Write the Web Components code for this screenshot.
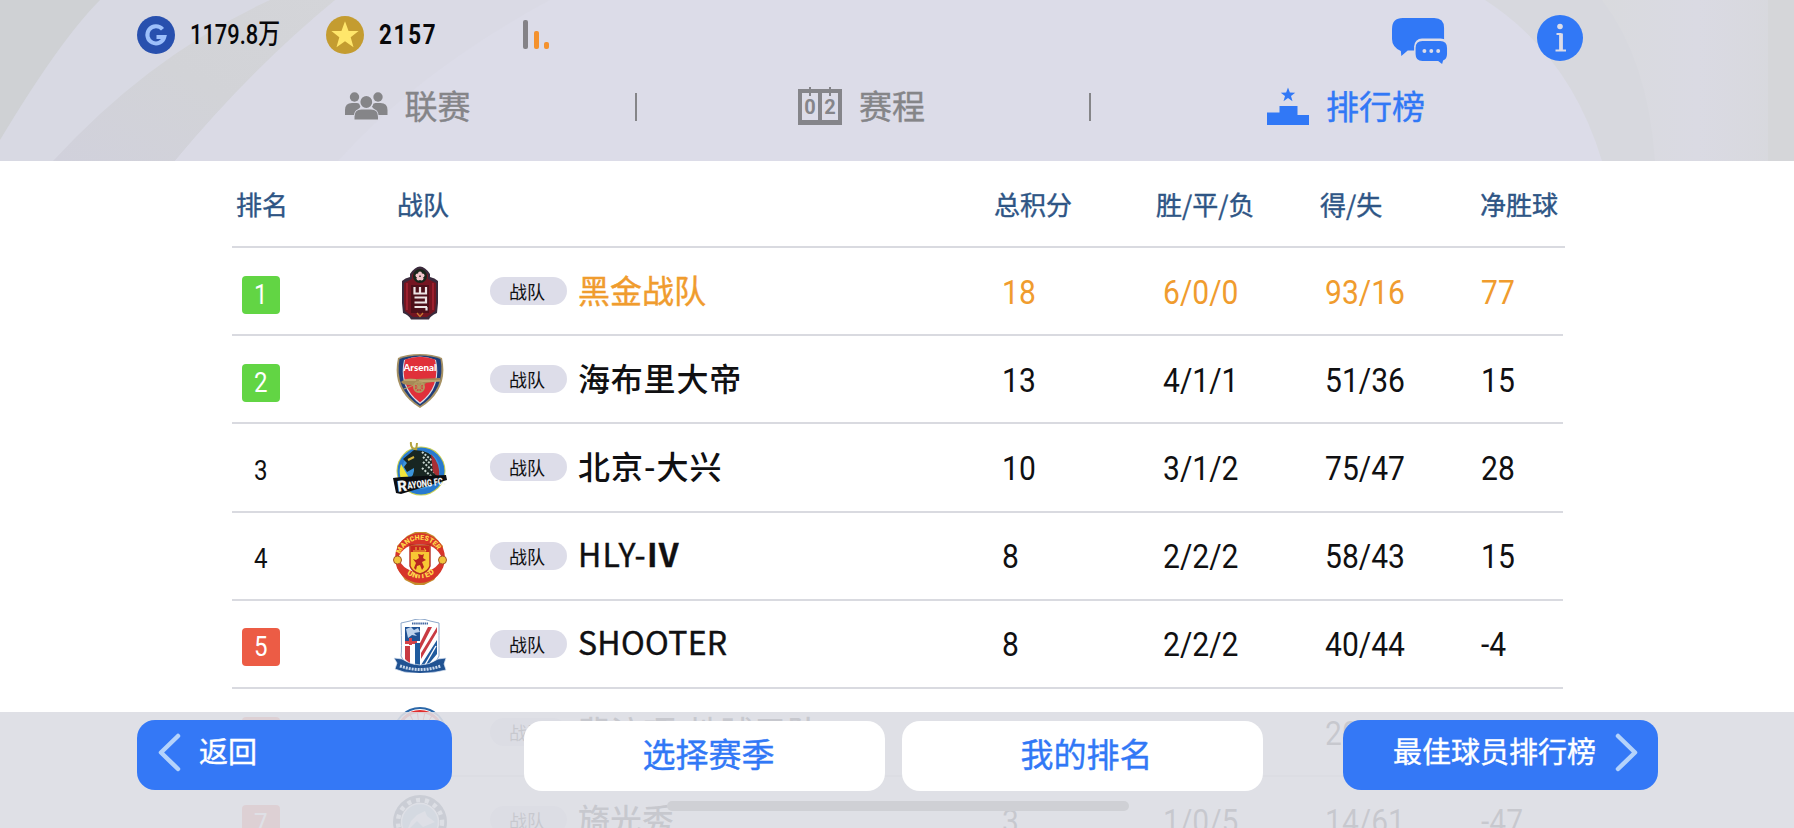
<!DOCTYPE html>
<html lang="zh-CN">
<head>
<meta charset="utf-8">
<title>排行榜</title>
<style>
  body {
    margin: 0;
    width: 1794px;
    height: 828px;
    overflow: hidden;
    background: #fff;
    font-family: "Noto Sans CJK SC", sans-serif;
  }
</style>
</head>
<body>
<league-screen>
  <league-header slot="header">
    <currency-chip slot="status" kind="gp" style="width: 189px">1179.8万</currency-chip>
    <currency-chip slot="status" kind="coin" style="width: 197px" bold>2157</currency-chip>
    <signal-bars slot="status"></signal-bars>
    <league-tab icon="people">联赛</league-tab>
    <league-tab icon="calendar">赛程</league-tab>
    <league-tab icon="podium" active>排行榜</league-tab>
  </league-header>
  <rank-table>
    <rank-row rank="1" zone="up" crest="eul" points="18" record="6/0/0" goals="93/16" diff="77" mine>黑金战队</rank-row>
    <rank-row rank="2" zone="up" crest="arsenal" points="13" record="4/1/1" goals="51/36" diff="15" style="--tracking: .8px">海布里大帝</rank-row>
    <rank-row rank="3" crest="rayong" points="10" record="3/1/2" goals="75/47" diff="28" style="--tracking: 1px">北京-大兴</rank-row>
    <rank-row rank="4" crest="united" points="8" record="2/2/2" goals="58/43" diff="15" latin style="--tracking: 1.3px">HLY-<b>IV</b></rank-row>
    <rank-row rank="5" zone="down" crest="shenhua" points="8" record="2/2/2" goals="40/44" diff="-4" latin style="--tracking: .3px">SHOOTER</rank-row>
    <rank-row rank="6" zone="down" crest="round" points="3" record="1/0/5" goals="20/47" diff="-27" style="--tracking: .8px">翡流项-地球卫队</rank-row>
    <rank-row rank="7" zone="down" crest="steel" points="3" record="1/0/5" goals="14/61" diff="-47">旖光秀</rank-row>
  </rank-table>
  <nav-bar slot="footer">
    <nav-button kind="back">返回</nav-button>
    <nav-button kind="plain" style="margin-left: 72px">选择赛季</nav-button>
    <nav-button kind="plain" style="margin-left: 17px">我的排名</nav-button>
    <nav-button kind="next" style="margin-left: 80px">最佳球员排行榜</nav-button>
  </nav-bar>
</league-screen>

<script>
const STAR = 'M0,-10 L2.5,-3.2 9.6,-3.1 4,1.3 6,8.2 0,4.1 -6,8.2 -4,1.3 -9.6,-3.1 -2.5,-3.2Z';

const ICONS = {
  people: `<svg width="43" height="28" viewBox="0 0 43 28" fill="#858588">
    <circle cx="9.5" cy="5" r="4.7"/><circle cx="33" cy="5" r="4.7"/>
    <path d="M0 23v-5q0-7 7-7h5q3 0 4 2.500q-1 3-3.500 4Q9.500 18.500 9 23z"/>
    <path d="M42.500 23v-5q0-7-7-7h-5q-3 0-4 2.500q1 3 3.500 4Q33 18.500 33.500 23z"/>
    <circle cx="21.300" cy="10" r="6.600" stroke="#dcdce8" stroke-width="1.400"/>
    <path d="M9.500 27.500v-3q0-7 7-7h9.500q7 0 7 7v3z"/></svg>`,
  calendar: `<svg width="44" height="38" viewBox="0 0 44 38">
    <path fill="#85858a" fill-rule="evenodd" d="M0 2h44v36H0zM4 6h16v27H4zM24 6h16v27H24z"/>
    <path stroke="#85858a" stroke-width="2" d="M12 0v9M32 0v9"/>
    <g font-family="Roboto, sans-serif" font-size="20" font-weight="700" fill="#85858a" text-anchor="middle">
      <text x="12" y="27">0</text><text x="32" y="27">2</text></g></svg>`,
  podium: `<svg width="42" height="38" viewBox="0 0 42 38" fill="#3178f6">
    <path d="${STAR}" transform="translate(21 8) scale(.75)"/>
    <path d="M0 25.500h12.500V19h18v9H42v10H0z"/></svg>`,
  gp: `<svg width="38" height="38" viewBox="0 0 38 38">
    <circle cx="19" cy="19" r="19" fill="#2850ae"/>
    <path d="M25.500 13.200A8.600 8.600 0 1 0 27.300 21H19.500" fill="none" stroke="#9dc0fb" stroke-width="4"/></svg>`,
  coin: `<svg width="38" height="38" viewBox="0 0 38 38">
    <circle cx="19" cy="19" r="19" fill="#c49c30"/>
    <path d="${STAR}" transform="translate(19 19.500) scale(1.420)" fill="#ffe66b"/></svg>`,
  chat: `<svg class="chat" width="56" height="46" viewBox="0 0 57 46" preserveAspectRatio="none">
    <path fill="#3178f6" d="M11 0h32q10 0 10 10v14q0 8-10 8.500H16L9.500 38 9 33Q0 29 0 21V11Q0 0 11 0z"/>
    <rect x="22.500" y="20.500" width="35" height="24" rx="8" fill="#dcdce8"/>
    <path fill="#3178f6" d="M31 23h18q7 0 7 7v6q0 5-4 6.500L51 46l-4-3H31q-7 0-7-7v-6q0-7 7-7z"/>
    <g fill="#dcdce8"><circle cx="33" cy="33" r="2"/><circle cx="40" cy="33" r="2"/><circle cx="47" cy="33" r="2"/></g></svg>`,
  info: `<svg width="46" height="46" viewBox="0 0 46 46">
    <circle cx="23" cy="23" r="23" fill="#3178f6"/>
    <circle cx="23" cy="11.500" r="2.800" fill="#dcdce8"/>
    <path fill="none" stroke="#dcdce8" stroke-width="3.800" d="M24 18.500V35"/>
    <path fill="none" stroke="#dcdce8" stroke-width="1.800" d="M19.500 19h5M18.500 35.500h10.500"/></svg>`
};

const CRESTS = {
  eul: `<path d="M17 8Q27-7 37 8v3q5 1 8 4v22l-1 10q-7 3-8 6.500H18Q16 49 10 47L9 37V15q3-3 8-4z" fill="#3a2a3c"/>
    <path d="M19 9Q27-3 35 9v4l8 4v20l-1 8-8 6H20l-8-6-1-8V17l8-4z" fill="#741521"/>
    <path d="M14 17v27M40 17v27" stroke="#b32738" stroke-width="1.300"/>
    <path d="M18 19h18v28H18z" fill="#4d101a"/>
    <circle cx="27" cy="10" r="7" fill="#17251b"/>
    <g fill="#f0c5cb"><circle cx="27" cy="7.500" r="2"/><circle cx="29.500" cy="9.500" r="2"/><circle cx="28.500" cy="12.500" r="2"/><circle cx="25.500" cy="12.500" r="2"/><circle cx="24.500" cy="9.500" r="2"/></g>
    <path d="M21.500 21v6.500H33V21M27 21v5.500M21.500 31.500H33v5H21.500M34 41H21.500M33.500 41v3.500" fill="none" stroke="#eee4e5" stroke-width="2.200"/>
    <path d="M24 47l3 3.500 3-3.500" fill="none" stroke="#c77932" stroke-width="1.300"/>`,
  arsenal: `<path d="M27 0Q40 0 49 4 56 36 27 54-2 36 5 4 13 0 27 0z" fill="#a69163"/>
    <path d="M27 1.500Q39 1.500 47.500 5 53 35 27 52 1 35 6.500 5 15 1.500 27 1.500z" fill="#203d78"/>
    <path d="M11 6Q27-1 43 6q6 28-16 44Q5 34 11 6z" fill="#d9dfeb"/>
    <path d="M12 5.500Q27 0 42 5.500q6 27-15 43Q6 33 12 5.500z" fill="#e0303a"/>
    <text x="27" y="17" text-anchor="middle" font-family="Lato, sans-serif" font-size="10" font-weight="900" fill="#fff" textLength="33" lengthAdjust="spacingAndGlyphs">Arsenal</text>
    <path d="M8 28q5-5 15-3l24-1v3l-14 2-2 2H16q-6 0-8-3z" fill="#a68a56"/>
    <path d="M11 26h12M26 27h21" stroke="#d5bd83" stroke-width="1"/>
    <circle cx="26" cy="33" r="5" fill="none" stroke="#b19960" stroke-width="2"/>
    <path d="M21 33h10M26 28v10M22.500 29.500l7 7M29.500 29.500l-7 7M11 35l10-4" stroke="#b19960" stroke-width="1.200"/>`,
  rayong: `<circle cx="28" cy="29" r="24.500" fill="#c8cf54"/><circle cx="28" cy="29" r="23.500" fill="#2779cf"/>
    <circle cx="28" cy="28" r="19" fill="#3b94dc"/>
    <path d="M8 22l8 14-7 4q-4-9-1-18z" fill="#f0e43d"/>
    <path d="M18 0q-1 6 5 8M24 1l-1 8" fill="none" stroke="#b3a340" stroke-width="2"/>
    <path d="M10 17L21 8l9 1q12 3 14 15l1 14H15q7-5 6-12l-7 4-3-5 3-4z" fill="#182622"/>
    <path d="M29 10l14 12M30 15l13 12M30 20l13 12M29 26l10 9" stroke="#c7d5cf" stroke-width="2" stroke-dasharray="2 1.500"/>
    <path d="M38 12q10 10 8 24l-6-6z" fill="#a92f35"/>
    <path d="M15 18l6-3" stroke="#d7b43c" stroke-width="2"/>
    <path d="M0 36l8-1 45-2 1 5-46 14-5-1z" fill="#0b0d11"/>
    <g transform="rotate(-7 27 40)" font-family="Roboto, sans-serif" font-weight="900" fill="#f2f4f4">
      <text x="4" y="47" font-size="15">R</text><text x="14" y="45.500" font-size="10" textLength="38" lengthAdjust="spacingAndGlyphs">AYONG FC.</text></g>`,
  united: `<path d="M14 5l8-4h11l8 4 9 10-1 22-8 12-10 5h-9l-10-5-8-12V15z" fill="#c58c2c"/>
    <circle cx="27" cy="27" r="25" fill="#d7352a"/>
    <path d="M5 27q6-14 22-14t22 14q-6 14-22 14T5 27z" fill="#fff"/>
    <circle cx="4.500" cy="29" r="4" fill="#f0c53d" stroke="#a6562b"/><circle cx="49.500" cy="29" r="4" fill="#f0c53d" stroke="#a6562b"/>
    <path id="top-arc" d="M7.500 23A20.500 20.500 0 0 1 46.500 23" fill="none"/>
    <path id="low-arc" d="M9 38A22 22 0 0 0 45 38" fill="none"/>
    <g font-family="Roboto, sans-serif" font-weight="900" fill="#ffd84b">
      <text font-size="7" textLength="47"><textPath href="#top-arc">MANCHESTER</textPath></text>
      <text font-size="8" textLength="30"><textPath href="#low-arc" startOffset="7">UNITED</textPath></text></g>
    <path d="M17 14h20v21q-2 6-10 8-8-2-10-8z" fill="#f8c834" stroke="#b62b22" stroke-width="1.400"/>
    <path d="M17.500 15h19v6h-19z" fill="#c8281f"/><path d="M20 20h13l-2-3M23 19v-3M27 19v-3" fill="none" stroke="#f5c338"/>
    <path d="M25 23l4 1 2-1-1 4 3 2-4 2 2 5-2 3-2-5-3 1-1 4-2-2 2-5-3-4 3 1 3-2z" fill="#b92620"/>`,
  shenhua: `<path d="M17 2q10-4 20 0l9 2q0 28 0 33-3 9-19 14Q11 46 8 37q1-5 0-33z" fill="#fff" stroke="#8ea8ca"/>
    <path d="M19 4.500h16" stroke="#4267a2" stroke-width="2" stroke-dasharray="1.500 .6"/>
    <path d="M12 8h15v14H12z" fill="#1f5194"/><path d="M13 10l5-2 3 3 4-2 2 4-6 1 3 3-5-1-4 3z" fill="#bdd2ec"/>
    <path d="M12 22l12 0 0 3-12 0zM16 19h3v7h-3z" fill="#d34349"/>
    <path d="M12 27h5v18l-5-5zM35 8h4L27 31v-7zM44 8v5L28 40v-6z" fill="#c93b43"/>
    <path d="M22 24h5v26l-5-2zM44 21v14L34 47l-6 2v-3z" fill="#205b9e"/>
    <path d="M43 27L32 46" stroke="#fff" stroke-width="1.400"/>
    <path d="M1 39l8 1q18 12 36 0l8-1-2 6 2 6-10 2q-16 3-32 0L2 50l2-6z" fill="#205292" stroke="#d9e3f0" stroke-width=".7"/>
    <path d="M7 47q20 7 41 0" fill="none" stroke="#c8d8ec" stroke-width="3" stroke-dasharray="2 1"/>`,
  round: `<circle cx="27" cy="27" r="27" fill="#2a67a8"/><circle cx="27" cy="27" r="25" fill="#fff"/>
    <circle cx="27" cy="27" r="24" fill="#e02e2e"/><circle cx="27" cy="27" r="17" fill="none" stroke="#fff" stroke-width="8" stroke-dasharray="5 1"/>`,
  steel: `<circle cx="27" cy="27" r="27" fill="#2f4451"/><circle cx="27" cy="27" r="22" fill="none" stroke="#e8edf0" stroke-width="4.500" stroke-dasharray="4 5"/>
    <circle cx="27" cy="27" r="18.500" fill="#8cb5cc" stroke="#f4f7fa" stroke-width="1.500"/>
    <path d="M24 20l8-4 2 5 8 6-12 5-6-6-10 10 4-10z" fill="#f0f6fa"/>`
};

function shadow(el, html) {
  el.attachShadow({ mode: 'open' });
  el.shadowRoot.innerHTML = html;
}

class LeagueScreen extends HTMLElement {
  constructor() {
    super();
    shadow(this, `
      <style>
        :host {
          display: flex;
          flex-direction: column;
          position: relative;
          width: 1794px;
          height: 828px;
          overflow: hidden;
          background: #fff;
        }
        ::slotted([slot="footer"]) {
          position: absolute;
          left: 0;
          bottom: 0;
        }
      </style>
      <slot name="header"></slot>
      <slot></slot>
      <slot name="footer"></slot>
    `);
  }
}

class LeagueHeader extends HTMLElement {
  constructor() {
    super();
    shadow(this, `
      <style>
        :host {
          display: block;
          flex: none;
          position: relative;
          height: 161px;
          background: #dcdce8;
        }
        .backdrop {
          position: absolute;
          inset: 0;
        }
        .status, .tabs {
          position: relative;
          display: flex;
        }
        .status {
          height: 69px;
          padding-left: 137px;
          align-items: center;
        }
        .tools {
          display: flex;
          gap: 89px;
          margin: 6px 0 0 auto;
          padding-right: 211px;
        }
        .tools svg { display: block; }
        .tools .chat { margin: 3px 0 -3px; }
        .tabs {
          height: 76px;
          margin-left: 182px;
          width: 1420px;
        }
      </style>
      <svg class="backdrop" width="1794" height="161" viewBox="0 0 1794 161">
        <defs>
          <linearGradient id="band" x1="0" y1="1" x2="1" y2="0">
            <stop offset="0" stop-color="#d1d1dc"/><stop offset=".5" stop-color="#d2d3d7"/><stop offset="1" stop-color="#d4d5d9"/>
          </linearGradient>
          <linearGradient id="edge">
            <stop offset="0" stop-color="#d9dade"/><stop offset=".5" stop-color="#dadae3"/><stop offset="1" stop-color="#d7d8dc"/>
          </linearGradient>
        </defs>
        <path d="M0 0H340L172 161H0z" fill="#d8d9e3"/>
        <path d="M0 0H100Q60 40 0 140z" fill="#cfd1d4"/>
        <path d="M270 0H340Q250 70 175 161H53Q150 55 270 0z" fill="url(#band)"/>
        <path d="M335 0H550Q420 70 338 161H175Q250 70 335 0z" fill="#dadae5"/>
        <path d="M1485 0H1794V161H1602Q1570 55 1485 0z" fill="#d7d8de"/>
        <path d="M1602 0H1794V161H1655Q1648 60 1602 0z" fill="url(#edge)"/>
        <path d="M1768 0H1794V161H1768z" fill="#d5d6d9"/>
      </svg>
      <div class="status">
        <slot name="status"></slot>
        <div class="tools">${ICONS.chat}${ICONS.info}</div>
      </div>
      <div class="tabs"><slot></slot></div>
    `);
  }
}

class CurrencyChip extends HTMLElement {
  constructor() {
    super();
    shadow(this, `
      <style>
        :host {
          display: flex;
          align-items: center;
          height: 38px;
          font: 500 26px/38px Roboto, "Noto Sans CJK SC", sans-serif;
          color: #08080a;
        }
        svg { margin-right: 15px; }
        .value {
          display: inline-block;
          white-space: nowrap;
          font-size: 28px;
          transform: scaleX(.78);
          transform-origin: left;
        }
        :host([bold]) .value {
          font-weight: 700;
          letter-spacing: 2.200px;
          transform: scaleX(.8);
        }
      </style>
      ${ICONS[this.getAttribute('kind')]}
      <span class="value"><slot></slot></span>
    `);
  }
}

class SignalBars extends HTMLElement {
  constructor() {
    super();
    shadow(this, `
      <style>
        :host {
          display: flex;
          align-items: flex-end;
          gap: 5.500px;
          height: 29px;
        }
        i {
          width: 5px;
          border-radius: 2px;
          background: #f4922e;
        }
      </style>
      <i style="height: 29px; background: #848287"></i>
      <i style="height: 18px"></i>
      <i style="height: 7px"></i>
    `);
  }
}

class LeagueTab extends HTMLElement {
  constructor() {
    super();
    shadow(this, `
      <style>
        :host {
          flex: none;
          display: flex;
          align-items: center;
          width: 454px;
          font-size: 33px;
          line-height: 48px;
          color: #858588;
          -webkit-text-stroke: .4px;
        }
        :host([active]) {
          width: 512px;
          color: #3178f6;
        }
        svg {
          margin-right: 17px;
          -webkit-text-stroke: 0;
        }
        .label { padding-bottom: 2px; }
        .rule {
          width: 2px;
          height: 28px;
          margin-right: -1px;
          background: #858588;
        }
        .body {
          flex: 1;
          display: flex;
          align-items: center;
          justify-content: center;
          padding: 0 2px 2px 0;
        }
        :host([active]) .body { padding-right: 0; }
        :host([active]) .rule { display: none; }
      </style>
      <div class="body">${ICONS[this.getAttribute('icon')]}<span class="label"><slot></slot></span></div>
      <div class="rule"></div>
    `);
  }
}

class RankTable extends HTMLElement {
  constructor() {
    super();
    shadow(this, `
      <style>
        :host {
          display: block;
          width: 1331px;
          margin-left: 232px;
        }
        .head {
          display: grid;
          grid-template-columns: 161px 597px 162px 164px 160px 1fr;
          align-items: center;
          width: 1329px;
          height: 85px;
          padding-left: 4px;
          border-bottom: 2px solid #d9dae0;
          font-size: 26px;
          line-height: 38px;
          color: #2e5585;
          white-space: nowrap;
          -webkit-text-stroke: .4px;
        }
      </style>
      <div class="head">
        <span>排名</span><span>战队</span><span>总积分</span><span>胜/平/负</span><span>得/失</span><span>净胜球</span>
      </div>
      <slot></slot>
    `);
  }
}

class RankRow extends HTMLElement {
  constructor() {
    super();
    const get = name => this.getAttribute(name);
    shadow(this, `
      <style>
        :host {
          display: grid;
          grid-template-columns: 151px 97px 88px 424px 161px 162px 156px 1fr;
          align-items: center;
          box-sizing: border-box;
          height: 88.200px;
          padding-left: 10px;
          border-bottom: 2px solid #d9dae0;
          color: #101012;
          white-space: nowrap;
        }
        .rank {
          width: 38px;
          height: 38px;
          margin-top: 7px;
          border-radius: 4px;
          font: 400 28px/38px Roboto, sans-serif;
          text-align: center;
        }
        .rank span {
          display: inline-block;
          transform: scaleX(.86);
        }
        :host([zone]) .rank { color: #fff; }
        :host([zone="up"]) .rank { background: #62d544; }
        :host([zone="down"]) .rank { background: #ec5c45; }
        svg {
          display: block;
          margin-top: 4px;
        }
        .tag {
          box-sizing: border-box;
          width: 77px;
          height: 28px;
          padding-right: 3px;
          border-radius: 14px;
          background: #dddde9;
          font-size: 18px;
          line-height: 28px;
          text-align: center;
        }
        .name {
          margin-top: -5px;
          font-size: 32px;
          font-weight: 500;
          line-height: 46px;
          letter-spacing: var(--tracking, 0);
        }
        :host([latin]) .name, :host([mine]) .name {
          font-weight: 400;
          -webkit-text-stroke: .4px;
        }
        .num {
          font: 400 33px/40px Roboto, sans-serif;
          margin-top: 3px;
          transform: scaleX(.91);
          transform-origin: left;
        }
        :host([mine]) .name, :host([mine]) .num { color: #f09c2e; }
      </style>
      <div class="rank"><span>${get('rank')}</span></div>
      <svg width="54" height="54" viewBox="0 0 54 54">${CRESTS[get('crest')]}</svg>
      <div class="tag">战队</div>
      <div class="name"><slot></slot></div>
      <div class="num">${get('points')}</div>
      <div class="num">${get('record')}</div>
      <div class="num">${get('goals')}</div>
      <div class="num">${get('diff')}</div>
    `);
  }
}

class NavBar extends HTMLElement {
  constructor() {
    super();
    shadow(this, `
      <style>
        :host {
          display: flex;
          align-items: flex-start;
          box-sizing: border-box;
          width: 1794px;
          height: 116px;
          padding: 8px 0 0 137px;
          background: rgba(220, 221, 227, .9);
        }
        .home {
          position: absolute;
          left: 667px;
          bottom: 17px;
          width: 462px;
          height: 10px;
          border-radius: 5px;
          background: #cfd0d5;
        }
      </style>
      <slot></slot>
      <div class="home"></div>
    `);
  }
}

class NavButton extends HTMLElement {
  constructor() {
    super();
    const chevron = d => `<svg width="23" height="39" viewBox="0 0 23 39"><path d="${d}" fill="none" stroke="#b5d3fb" stroke-width="4.500" stroke-linecap="round" stroke-linejoin="round"/></svg>`;
    const kind = this.getAttribute('kind');
    shadow(this, `
      <style>
        :host {
          display: flex;
          align-items: center;
          box-sizing: border-box;
          width: 315px;
          height: 70px;
          border-radius: 18px;
          background: #3478f6;
          color: #fff;
          font-size: 29px;
          line-height: 42px;
          white-space: nowrap;
          -webkit-text-stroke: .4px;
        }
        span { padding-bottom: 4px; }
        :host([kind="back"]) {
          padding: 0 0 6px 21px;
          gap: 18px;
        }
        :host([kind="next"]) {
          justify-content: flex-end;
          padding: 0 20px 6px 0;
          gap: 19px;
        }
        :host([kind="plain"]) {
          justify-content: center;
          width: 361px;
          margin-top: 1px;
          padding: 0 0 2px 8px;
          background: #fff;
          color: #3178f6;
          font-size: 33px;
        }
      </style>
      ${kind === 'back' ? chevron('M20 3L3 19.500 20 36') : ''}
      <span><slot></slot></span>
      ${kind === 'next' ? chevron('M3 3l17 16.500L3 36') : ''}
    `);
  }
}

customElements.define('league-screen', LeagueScreen);
customElements.define('league-header', LeagueHeader);
customElements.define('currency-chip', CurrencyChip);
customElements.define('signal-bars', SignalBars);
customElements.define('league-tab', LeagueTab);
customElements.define('rank-table', RankTable);
customElements.define('rank-row', RankRow);
customElements.define('nav-bar', NavBar);
customElements.define('nav-button', NavButton);
</script>
</body>
</html>
